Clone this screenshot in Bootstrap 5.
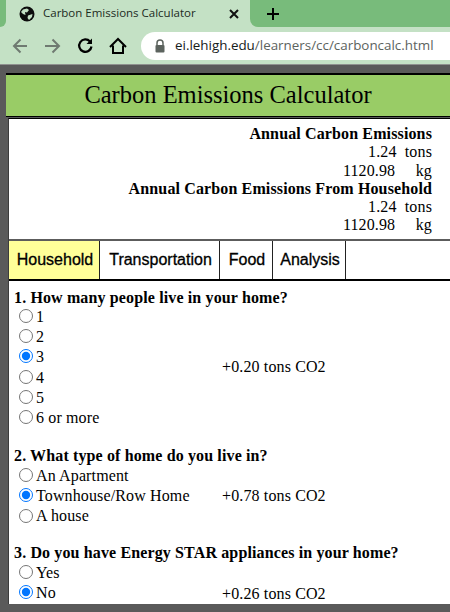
<!DOCTYPE html>
<html lang="en">
<head>
    <meta charset="UTF-8">
    <meta name="viewport" content="width=device-width, initial-scale=1.0">
    <title>Carbon Emissions Calculator</title>
    <link href="https://cdn.jsdelivr.net/npm/bootstrap@5.3.0/dist/css/bootstrap.min.css" rel="stylesheet">
    <style>
        html, body { height: 612px; overflow: hidden; }
        body { background: #5a5a5a; font-family: "Liberation Serif", serif; font-size: 16px; line-height: 18.3px; letter-spacing: 0.13px; color: #000; }

        /* browser chrome */
        .tab-strip { height: 27px; background: #c4e1c5; letter-spacing: 0; }
        .tab-stub { width: 6px; background: #78bb7b; border-radius: 0 0 6px 0; }
        .tab-active { width: 244px; padding-left: 13px; font-family: "Open Sans", "Liberation Sans", sans-serif; font-size: 11.5px; color: #1c2b1e; }
        .tab-title { margin-left: 8px; width: 186px; white-space: nowrap; }
        .tab-rest { flex: 1; background: #78bb7b; border-radius: 0 0 0 8px; padding-left: 17px; }
        .tool-bar { height: 37px; background: #c4e1c5; padding-left: 11px; letter-spacing: 0; }
        .tool-btn { width: 20px; height: 20px; margin-right: 12px; flex: none; }
        .url-pill { flex: 1; height: 28px; margin-left: 2px; background: #fff; border-radius: 14px 0 0 14px; padding-left: 13px; font-family: "Open Sans", "Liberation Sans", sans-serif; font-size: 13.4px; color: #5c635e; white-space: nowrap; overflow: hidden; }
        .url-host { color: #16201a; }
        .lock-icon { margin-right: 9px; flex: none; }

        /* page */
        .page-wrap { padding: 8px 0 0 6px; border-top: 1px solid #8f918f; }
        .title-bar { background: #99cc66; border-top: 2px solid #000; border-bottom: 1px solid #000; height: 44px; font-size: 24.5px; line-height: 39px; letter-spacing: 0; text-align: center; }
        .calc-box { margin-top: 1px; margin-left: 2px; background: #fff; border-top: 1px solid #000; border-left: 1px solid #3c3c3c; height: 486px; overflow: hidden; }
        .totals { padding: 6px 18px 0 0; height: 120px; text-align: right; }
        .kg-line { word-spacing: 1px; }
        .tab-row { border-top: 2px solid #5c5c5c; border-bottom: 2px solid #000; height: 42px; }
        .calc-tab { height: 38px; padding-left: 2px; border-right: 1px solid #222; font-family: "Liberation Sans", sans-serif; font-size: 16px; -webkit-text-stroke: 0.3px #000; line-height: 38px; letter-spacing: 0; text-align: center; white-space: nowrap; }
        .tab-house { background: #ffff99; width: 91px; }
        .tab-trans { width: 120px; }
        .tab-food { width: 53px; }
        .tab-anal { width: 73px; }
        .question-list { padding: 8px 0 0 5px; }
        .q-head { font-weight: 700; height: 19px; }
        .q-group { margin-bottom: 17px; }
        .q-first .q-head { height: 18px; }
        .q-first { margin-bottom: 19px; }
        .q-opts { width: 208px; padding-left: 4px; flex: none; }
        .q-opt { height: 20.2px; display: flex; align-items: center; }
        .q-opt input { width: 14px; height: 14px; margin: 0 3px 2px 1px; flex: none; }
        .q-score { white-space: nowrap; }
    </style>
</head>
<body>
    <div class="tab-strip d-flex">
        <div class="tab-stub"></div>
        <div class="tab-active d-flex align-items-center">
            <svg width="16" height="16" viewBox="0 0 16 16"><circle cx="8" cy="8" r="7.5" fill="#0d0d0d"/><path d="M4 3.500 8 2.500 10 4 8 6.500 6 6 6.500 9 4 8 2 6Z M9 9.500 13.500 8 13 11 10 14 8.500 12Z" fill="#c4e1c5"/></svg>
            <span class="tab-title">Carbon Emissions Calculator</span>
            <svg width="10" height="10" viewBox="0 0 10 10"><path d="M1 1 9 9M9 1 1 9" stroke="#111" stroke-width="2"/></svg>
        </div>
        <div class="tab-rest d-flex align-items-center">
            <svg width="12" height="12" viewBox="0 0 12 12"><path d="M6 0V12M0 6H12" stroke="#000" stroke-width="2"/></svg>
        </div>
    </div>
    <div class="tool-bar d-flex align-items-center">
        <svg class="tool-btn" viewBox="0 0 20 20" fill="none" stroke="#6f7a71" stroke-width="2"><path d="M16 10H3M9.500 3.500 3 10 9.500 16.500"/></svg>
        <svg class="tool-btn" viewBox="0 0 20 20" fill="none" stroke="#6f7a71" stroke-width="2"><path d="M2 10H16M9.500 3.500 16 10 9.500 16.500"/></svg>
        <svg class="tool-btn" viewBox="0 0 20 20" fill="none" stroke="#000" stroke-width="2.200"><path d="M16.500 10.500A6.200 6.200 0 1 1 15 5.500"/><path d="M17 2.500V8H11.500Z" fill="#000" stroke="none"/></svg>
        <svg class="tool-btn" viewBox="0 0 20 20" fill="none" stroke="#000" stroke-width="2"><path d="M3 11 11 3 19 11M6 9.500V17H16V9.500"/></svg>
        <div class="url-pill d-flex align-items-center">
            <svg class="lock-icon" width="12" height="14" viewBox="0 0 12 14"><path d="M3 6V4A3 3 0 0 1 9 4V6" fill="none" stroke="#5c635e" stroke-width="1.500"/><rect x="1.500" y="6" width="9" height="7.500" rx="1" fill="#5c635e"/></svg>
            <span><span class="url-host">ei.lehigh.edu</span>/learners/cc/carboncalc.html</span>
        </div>
    </div>

    <div class="page-wrap">
        <div class="title-bar">Carbon Emissions Calculator</div>
        <div class="calc-box">
            <div class="totals">
                <div class="fw-bold">Annual Carbon Emissions</div>
                <div>1.24&nbsp; tons</div>
                <div class="kg-line">1120.98 &nbsp;&nbsp; kg</div>
                <div class="fw-bold">Annual Carbon Emissions From Household</div>
                <div>1.24&nbsp; tons</div>
                <div class="kg-line">1120.98 &nbsp;&nbsp; kg</div>
            </div>
            <div class="tab-row d-flex">
                <div class="calc-tab tab-house">Household</div>
                <div class="calc-tab tab-trans">Transportation</div>
                <div class="calc-tab tab-food">Food</div>
                <div class="calc-tab tab-anal">Analysis</div>
            </div>
            <div class="question-list">
                <div class="q-group q-first">
                    <div class="q-head">1. How many people live in your home?</div>
                    <div class="d-flex align-items-center">
                        <div class="q-opts">
                            <label class="q-opt"><input type="radio" name="q1">1</label>
                            <label class="q-opt"><input type="radio" name="q1">2</label>
                            <label class="q-opt"><input type="radio" name="q1" checked>3</label>
                            <label class="q-opt"><input type="radio" name="q1">4</label>
                            <label class="q-opt"><input type="radio" name="q1">5</label>
                            <label class="q-opt"><input type="radio" name="q1">6 or more</label>
                        </div>
                        <div class="q-score">+0.20 tons CO2</div>
                    </div>
                </div>
                <div class="q-group">
                    <div class="q-head">2. What type of home do you live in?</div>
                    <div class="d-flex align-items-center">
                        <div class="q-opts">
                            <label class="q-opt"><input type="radio" name="q2">An Apartment</label>
                            <label class="q-opt"><input type="radio" name="q2" checked>Townhouse/Row Home</label>
                            <label class="q-opt"><input type="radio" name="q2">A house</label>
                        </div>
                        <div class="q-score">+0.78 tons CO2</div>
                    </div>
                </div>
                <div class="q-group">
                    <div class="q-head">3. Do you have Energy STAR appliances in your home?</div>
                    <div class="d-flex align-items-end">
                        <div class="q-opts">
                            <label class="q-opt"><input type="radio" name="q3">Yes</label>
                            <label class="q-opt"><input type="radio" name="q3" checked>No</label>
                        </div>
                        <div class="q-score">+0.26 tons CO2</div>
                    </div>
                </div>
            </div>
        </div>
    </div>
    <script src="https://cdn.jsdelivr.net/npm/bootstrap@5.3.0/dist/js/bootstrap.bundle.min.js"></script>
</body>
</html>
